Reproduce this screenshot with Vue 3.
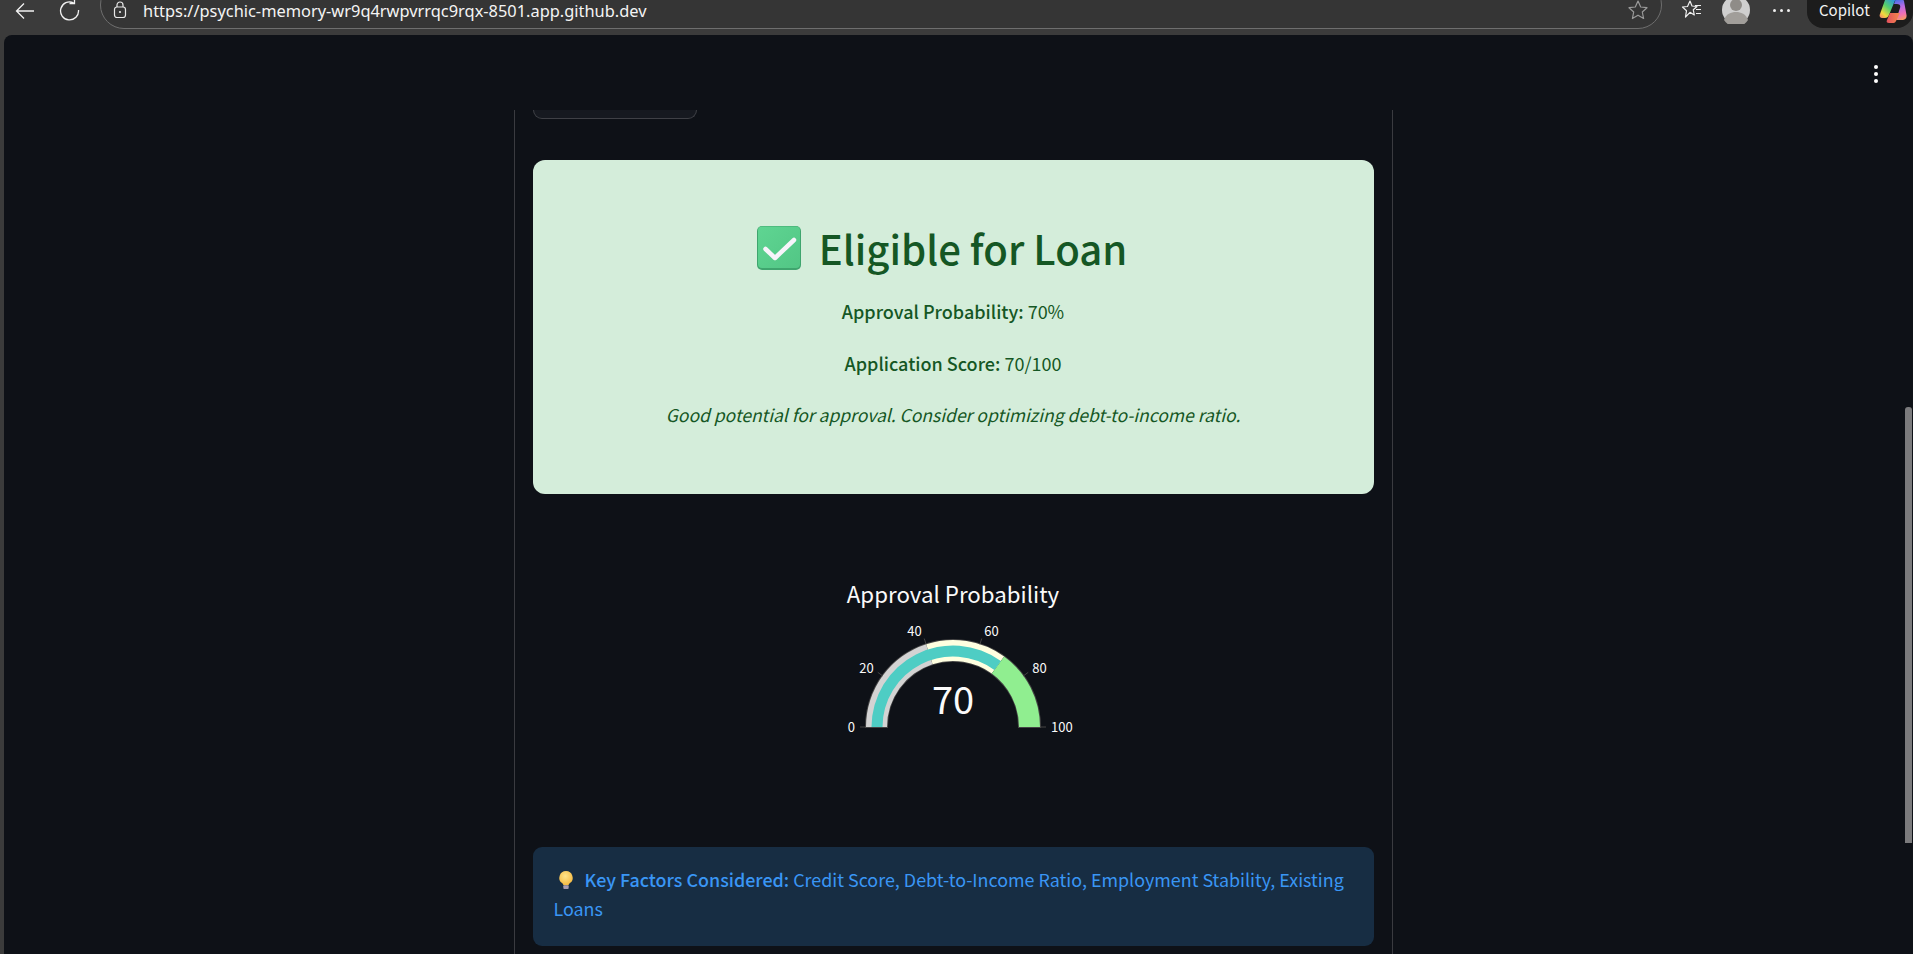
<template>
  <div class="window">
    <header class="browser-bar">
      <button class="nav-btn" type="button" aria-label="Back">
        <svg width="24" height="24" viewBox="0 0 24 24"><path d="M21 12H4M11 4.500L3.500 12l7.500 7.500" fill="none" stroke="#f2f2f2" stroke-width="1.300"/></svg>
      </button>
      <button class="nav-btn" type="button" aria-label="Reload">
        <svg width="24" height="24" viewBox="0 0 24 24"><path d="M15.500 3.800A9 9 0 1 0 20.500 11M16.500 -1v5.500h-5" fill="none" stroke="#f2f2f2" stroke-width="1.300"/></svg>
      </button>
      <div class="address">
        <svg class="lock" width="16" height="18" viewBox="0 0 16 18"><rect x="2.500" y="6" width="11" height="10.500" rx="2.500" fill="none" stroke="#e8e8e8" stroke-width="1.200"/><path d="M5 6V4a3 3 0 0 1 6 0v2" fill="none" stroke="#e8e8e8" stroke-width="1.200"/><circle cx="8" cy="11" r="1.100" fill="#e8e8e8"/></svg>
        <span class="url">https://psychic-memory-wr9q4rwpvrrqc9rqx-8501.app.github.dev</span>
        <svg class="star" width="22" height="22" viewBox="0 0 22 22"><path d="M11 2l2.700 6 6.300.7-4.700 4.300 1.300 6.500L11 16.200 5.400 19.500 6.700 13 2 8.700 8.300 8z" fill="none" stroke="#9a9a9a" stroke-width="1.200" stroke-linejoin="round"/></svg>
      </div>
      <svg class="favs" width="22" height="22" viewBox="0 0 22 22"><path d="M9 2l2 5 5 .5-3.700 3.300 1 5.200L9 13.300 4.500 18l1-6.300L1.500 8l5-.5z" fill="none" stroke="#f0f0f0" stroke-width="1.200" stroke-linejoin="round"/><path d="M14 6.500h6M15 10.500h5M15 14.500h5" stroke="#f0f0f0" stroke-width="1.200"/></svg>
      <div class="avatar">
        <svg width="28" height="28" viewBox="0 0 28 28"><circle cx="14" cy="14" r="14" fill="#cfcfcf"/><circle cx="14" cy="9" r="6" fill="#8f8c88"/><path d="M2 24c2-6 7-8 12-8s10 2 12 8a14 14 0 0 1-24 0z" fill="#a19e9a"/></svg>
      </div>
      <div class="more-h"><i></i><i></i><i></i></div>
      <div class="copilot">
        <span>Copilot</span>
        <svg width="28" height="28" viewBox="0 0 28 28">
          <defs>
            <linearGradient id="cpA" x1=".8" y1="0" x2=".1" y2="1"><stop offset="0" stop-color="#2a8fe6"/><stop offset=".45" stop-color="#55cf6a"/><stop offset=".8" stop-color="#f2d93c"/><stop offset="1" stop-color="#f08a6a"/></linearGradient>
            <linearGradient id="cpB" x1=".4" y1="0" x2=".6" y2="1"><stop offset="0" stop-color="#3a6fe6"/><stop offset=".4" stop-color="#b56be6"/><stop offset=".75" stop-color="#f06fb4"/><stop offset="1" stop-color="#f79a62"/></linearGradient>
            <linearGradient id="cpC" x1="0" y1="0" x2="1" y2="0"><stop offset="0" stop-color="#e4505e"/><stop offset="1" stop-color="#f58a4a"/></linearGradient>
          </defs>
          <path d="M8 2h9l-7 17c-1 2-2 3-4 3H3C1 22 0 20 1 18l5-14C6.500 3 7 2 8 2z" fill="url(#cpA)"/>
          <path d="M17 2h4c2 0 3 1 4 3l2.500 14c.5 3-1 5-3.500 5h-7l4-12c1-3-1-4-3-4h-3z" fill="url(#cpB)"/>
          <path d="M8 24l3-7h10l-4 8c-1 2-2 2-4 2h-3c-2 0-3-1-2-3z" fill="url(#cpC)"/>
        </svg>
      </div>
    </header>

    <div class="panel">
      <div class="more-v"><i></i><i></i><i></i></div>
      <div class="scrollbar"></div>
      <main class="column">
        <div class="cut-button"></div>

        <section class="result">
          <h1 class="result__title">
            <svg class="check" width="44" height="44" viewBox="0 0 44 44">
              <defs>
                <linearGradient id="chk" x1="0" y1="0" x2="1" y2="1"><stop offset="0" stop-color="#5fd592"/><stop offset="1" stop-color="#52c685"/></linearGradient>
              </defs>
              <rect width="44" height="44" rx="5" fill="#3fa56e"/>
              <rect x="1" y=".5" width="42" height="41.500" rx="4" fill="url(#chk)"/>
              <path d="M8.500 23l9.500 9L37 14" fill="none" stroke="#f8f4fb" stroke-width="4.500" stroke-linecap="round" stroke-linejoin="round"/>
            </svg>
            Eligible for Loan
          </h1>
          <p><b>Approval Probability:</b> 70%</p>
          <p><b>Application Score:</b> 70/100</p>
          <p class="result__note">Good potential for approval. Consider optimizing debt-to-income ratio.</p>
        </section>

        <section class="gauge">
          <svg width="841" height="240" viewBox="0 0 841 240">
            <text class="gauge__title" x="420" y="76" text-anchor="middle">Approval Probability</text>
            <path :d="ringOutline" fill="none" stroke="#444" stroke-width="2"/>
            <path v-for="s in steps" :key="s.from" :d="s.d" :fill="s.color"/>
            <path :d="valueArc" fill="#4ecdc4"/>
            <line v-for="t in ticks" :key="'l' + t.v" :x1="t.x1" :y1="t.y1" :x2="t.x2" :y2="t.y2" stroke="#444" stroke-width="1"/>
            <text v-for="t in ticks" :key="t.v" class="gauge__tick" :x="t.tx" :y="t.ty" :text-anchor="t.anchor">{{ t.v }}</text>
            <text class="gauge__value" :x="cx" :y="cy - 13" text-anchor="middle">70</text>
          </svg>
        </section>

        <section class="info">
          <svg class="bulb" width="16" height="22" viewBox="0 0 18 22">
            <defs>
              <radialGradient id="blb" cx=".45" cy=".35" r=".7"><stop offset="0" stop-color="#ffe48a"/><stop offset="1" stop-color="#f4b63c"/></radialGradient>
            </defs>
            <path d="M9 1a7.500 7.500 0 0 0-4.500 13.500C6 16 6 16.500 6 17h6c0-.5 0-1 1.500-2.500A7.500 7.500 0 0 0 9 1z" fill="url(#blb)"/>
            <rect x="6" y="17" width="6" height="4" rx="1" fill="#a79bb0"/>
          </svg>
          <b>Key Factors Considered:</b> Credit Score, Debt-to-Income Ratio, Employment Stability, Existing Loans
        </section>
      </main>
    </div>
  </div>
</template>

<script setup>
const cx = 420
const cy = 200

const polar = (v, r) => {
  const a = Math.PI * (1 - v / 100)
  return [cx + r * Math.cos(a), cy - r * Math.sin(a)]
}

const arc = (from, to, r0, r1) => {
  const [ax, ay] = polar(from, r1)
  const [bx, by] = polar(to, r1)
  const [cx2, cy2] = polar(to, r0)
  const [dx, dy] = polar(from, r0)
  return `M${ax} ${ay}A${r1} ${r1} 0 0 1 ${bx} ${by}L${cx2} ${cy2}A${r0} ${r0} 0 0 0 ${dx} ${dy}Z`
}

const ringOutline = arc(0, 100, 66, 87)

const steps = [
  { from: 0, to: 40, color: '#d3d3d3' },
  { from: 40, to: 70, color: '#ffffe0' },
  { from: 70, to: 100, color: '#90ee90' }
].map((s) => ({ ...s, d: arc(s.from, s.to, 66, 87) }))

const valueArc = arc(0, 70, 70.500, 81.500)

const ticks = [0, 20, 40, 60, 80, 100].map((v) => {
  const [x1, y1] = polar(v, 87)
  const [x2, y2] = polar(v, 93)
  const [tx, ty] = polar(v, v === 40 || v === 60 ? 101 : 98)
  return {
    v,
    x1,
    y1,
    x2,
    y2,
    tx,
    ty: v === 20 || v === 80 ? ty + 4 : ty + 5,
    anchor: v <= 40 ? 'end' : 'start'
  }
})
</script>

<style scoped>
.window {
  display: flex;
  flex-direction: column;
  height: 954px;
  overflow: hidden;
  background: #3b3b3b;
  font-family: "Noto Sans CJK SC", "Noto Sans", sans-serif;
}

.browser-bar {
  display: flex;
  align-items: center;
  flex: 0 0 35px;
  height: 35px;
  padding: 0 0 0 13px;
  overflow: hidden;
  color: #f2f2f2;
}

.nav-btn {
  display: flex;
  width: 24px;
  height: 24px;
  margin-top: -14px;
  margin-right: 21px;
  padding: 0;
  border: none;
  background: none;
}

.address {
  display: flex;
  align-items: center;
  flex: 1;
  height: 48px;
  margin-top: -25px;
  margin-left: -3px;
  padding: 10px 12px 0 11px;
  border: 1px solid #6e6e6e;
  border-radius: 24px;
  box-sizing: border-box;
  background: #353535;
}

.lock {
  margin-right: 15px;
}

.url {
  flex: 1;
  font-family: "Noto Sans", sans-serif;
  font-size: 16.400px;
  color: #f4f4f4;
}

.favs {
  margin: -15px 0 0 19px;
}

.avatar {
  width: 28px;
  height: 28px;
  margin: -16px 0 0 19px;
}

.more-h {
  display: flex;
  gap: 4px;
  margin: -15px 0 0 23px;
}

.more-h i {
  width: 3px;
  height: 3px;
  border-radius: 50%;
  background: #eee;
}

.copilot {
  display: flex;
  align-items: center;
  gap: 9px;
  height: 44px;
  margin: -23px 0 0 17px;
  padding: 7px 0 0 12px;
  box-sizing: border-box;
  width: 106px;
  border-radius: 16px;
  background: #1c1c1c;
  font-size: 15px;
}

.panel {
  position: relative;
  display: flex;
  justify-content: center;
  flex: 1;
  margin-left: 4px;
  padding-right: 11px;
  overflow: hidden;
  border-radius: 8px 8px 0 0;
  background: #0e1117;
}

.more-v {
  position: absolute;
  top: 30px;
  right: 35px;
  display: flex;
  flex-direction: column;
  gap: 3px;
}

.more-v i {
  width: 4px;
  height: 4px;
  border-radius: 50%;
  background: #fff;
}

.scrollbar {
  position: absolute;
  top: 372px;
  right: 1px;
  width: 7px;
  height: 436px;
  border-radius: 3px 3px 0 0;
  background: #7b7b7d;
}

.column {
  width: 841px;
  margin-top: 75px;
  padding: 0 18px;
  border-left: 1px solid #3a3b40;
  border-right: 1px solid #3a3b40;
}

.cut-button {
  width: 164px;
  height: 9px;
  border: 1px solid #3f4046;
  border-top: none;
  border-radius: 0 0 9px 9px;
  box-sizing: border-box;
  background: #161920;
}

.result {
  margin-top: 41px;
  padding: 63px 18px 64px;
  border-radius: 12px;
  background: #d4edda;
  color: #155724;
  font-size: 18px;
  line-height: 30px;
  text-align: center;
}

.result__title {
  display: flex;
  align-items: center;
  justify-content: center;
  gap: 18px;
  margin: 0 0 23px;
  padding-right: 22px;
  font-size: 40.100px;
  font-weight: 500;
  line-height: 50px;
}

.result p {
  margin: 0 0 22px;
}

.result p:last-child {
  margin: 0;
}

.result b {
  font-weight: 500;
}

.result .result__note {
  font-size: 17.500px;
  font-style: italic;
}

.gauge {
  display: flex;
  justify-content: center;
  height: 353px;
  padding-top: 33px;
  box-sizing: border-box;
}

.gauge__title {
  font-size: 22.300px;
  fill: #fafafa;
}

.gauge__tick {
  font-size: 13px;
  fill: #fafafa;
}

.gauge__value {
  font-size: 38px;
  fill: #fafafa;
}

.info {
  padding: 17.500px 20px 22.500px 21px;
  border-radius: 9px;
  background: #172d43;
  color: #3a96f5;
  font-size: 17.900px;
  line-height: 29.500px;
}

.info b {
  font-weight: 500;
}

.bulb {
  margin: 0 11px 0 4px;
  vertical-align: -4px;
}
</style>

<style>
html,
body {
  overflow: hidden;
}
</style>
